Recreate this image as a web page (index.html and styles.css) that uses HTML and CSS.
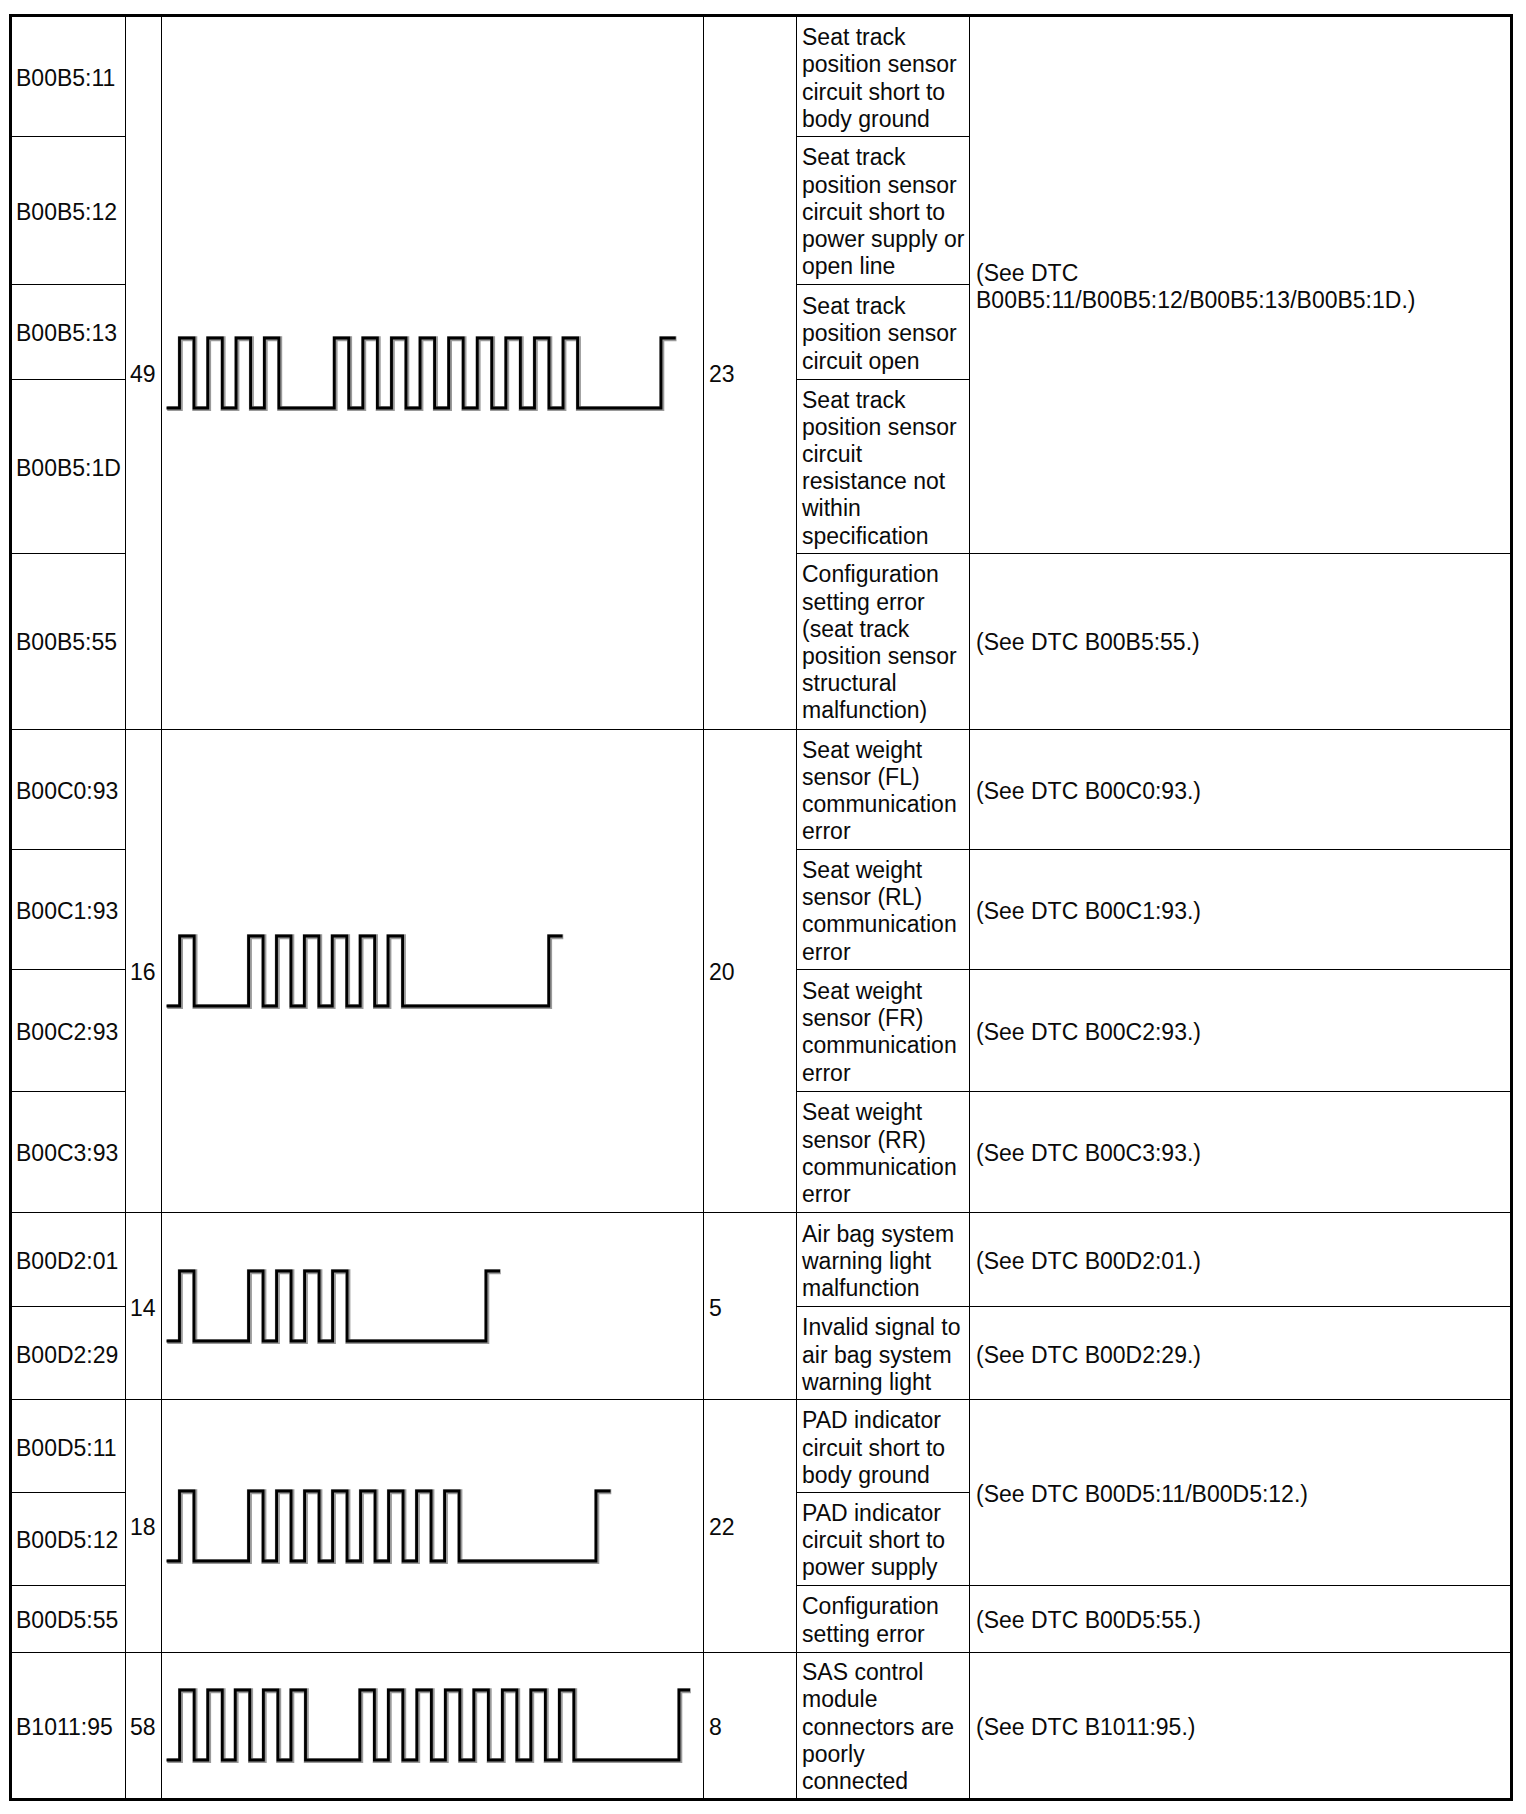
FILE: index.html
```html
<!DOCTYPE html>
<html lang="en">
<head>
<meta charset="utf-8">
<title>DTC table</title>
<link rel="stylesheet" href="styles.css">
</head>
<body>
<table class="dtc-table">
  <colgroup>
    <col class="c-code">
    <col class="c-num">
    <col class="c-wave">
    <col class="c-num2">
    <col class="c-desc">
    <col class="c-see">
  </colgroup>
  <tbody>
    <tr class="r1">
      <td class="code">B00B5:11</td>
      <td class="num" rowspan="5">49</td>
      <td class="wave" rowspan="5">
        <svg class="wf" width="542" height="76" viewBox="0 0 542 76">
          <path class="ghost" d="M4.5 73H17.5V3H32V73H45.8V3H60.3V73H74.1V3H88.6V73H102.4V3H116.9V73H172.3V3H186.8V73H200.9V3H215.4V73H229.5V3H244V73H258.1V3H272.6V73H286.7V3H301.2V73H315.3V3H329.8V73H343.9V3H358.4V73H372.5V3H387V73H401.1V3H415.6V73H499V3H513.7"/>
          <path class="line" d="M4.5 73H17.5V3H32V73H45.8V3H60.3V73H74.1V3H88.6V73H102.4V3H116.9V73H172.3V3H186.8V73H200.9V3H215.4V73H229.5V3H244V73H258.1V3H272.6V73H286.7V3H301.2V73H315.3V3H329.8V73H343.9V3H358.4V73H372.5V3H387V73H401.1V3H415.6V73H499V3H513.7"/>
        </svg>
      </td>
      <td class="num n2" rowspan="5">23</td>
      <td class="desc">Seat track<br>position sensor<br>circuit short to<br>body ground</td>
      <td class="see" rowspan="4">(See DTC<br>B00B5:11/B00B5:12/B00B5:13/B00B5:1D.)</td>
    </tr>
    <tr class="r2">
      <td class="code">B00B5:12</td>
      <td class="desc">Seat track<br>position sensor<br>circuit short to<br>power supply or<br>open line</td>
    </tr>
    <tr class="r3">
      <td class="code">B00B5:13</td>
      <td class="desc">Seat track<br>position sensor<br>circuit open</td>
    </tr>
    <tr class="r4">
      <td class="code">B00B5:1D</td>
      <td class="desc">Seat track<br>position sensor<br>circuit<br>resistance not<br>within<br>specification</td>
    </tr>
    <tr class="r5">
      <td class="code">B00B5:55</td>
      <td class="desc">Configuration<br>setting error<br>(seat track<br>position sensor<br>structural<br>malfunction)</td>
      <td class="see">(See DTC B00B5:55.)</td>
    </tr>

    <tr class="r6">
      <td class="code">B00C0:93</td>
      <td class="num" rowspan="4">16</td>
      <td class="wave" rowspan="4">
        <svg class="wf" width="542" height="76" viewBox="0 0 542 76">
          <path class="ghost" d="M4.5 73H17.7V3H32.2V73H86.6V3H101.1V73H114.5V3H129V73H142.4V3H156.9V73H170.3V3H184.8V73H198.2V3H212.7V73H226.1V3H240.6V73H386.8V3H400.5"/>
          <path class="line" d="M4.5 73H17.7V3H32.2V73H86.6V3H101.1V73H114.5V3H129V73H142.4V3H156.9V73H170.3V3H184.8V73H198.2V3H212.7V73H226.1V3H240.6V73H386.8V3H400.5"/>
        </svg>
      </td>
      <td class="num n2" rowspan="4">20</td>
      <td class="desc">Seat weight<br>sensor (FL)<br>communication<br>error</td>
      <td class="see">(See DTC B00C0:93.)</td>
    </tr>
    <tr class="r7">
      <td class="code">B00C1:93</td>
      <td class="desc">Seat weight<br>sensor (RL)<br>communication<br>error</td>
      <td class="see">(See DTC B00C1:93.)</td>
    </tr>
    <tr class="r8">
      <td class="code">B00C2:93</td>
      <td class="desc">Seat weight<br>sensor (FR)<br>communication<br>error</td>
      <td class="see">(See DTC B00C2:93.)</td>
    </tr>
    <tr class="r9">
      <td class="code">B00C3:93</td>
      <td class="desc">Seat weight<br>sensor (RR)<br>communication<br>error</td>
      <td class="see">(See DTC B00C3:93.)</td>
    </tr>

    <tr class="r10">
      <td class="code">B00D2:01</td>
      <td class="num" rowspan="2">14</td>
      <td class="wave" rowspan="2">
        <svg class="wf" width="542" height="76" viewBox="0 0 542 76">
          <path class="ghost" d="M4.5 73H17.5V3H32V73H86.6V3H101.1V73H114.6V3H129.1V73H142.6V3H157.1V73H170.6V3H185.1V73H324V3H338"/>
          <path class="line" d="M4.5 73H17.5V3H32V73H86.6V3H101.1V73H114.6V3H129.1V73H142.6V3H157.1V73H170.6V3H185.1V73H324V3H338"/>
        </svg>
      </td>
      <td class="num n2" rowspan="2">5</td>
      <td class="desc">Air bag system<br>warning light<br>malfunction</td>
      <td class="see">(See DTC B00D2:01.)</td>
    </tr>
    <tr class="r11">
      <td class="code">B00D2:29</td>
      <td class="desc">Invalid signal to<br>air bag system<br>warning light</td>
      <td class="see">(See DTC B00D2:29.)</td>
    </tr>

    <tr class="r12">
      <td class="code">B00D5:11</td>
      <td class="num" rowspan="3">18</td>
      <td class="wave" rowspan="3">
        <svg class="wf" width="542" height="76" viewBox="0 0 542 76">
          <path class="ghost" d="M4.5 73H17.5V3H32V73H86.6V3H101.1V73H114.6V3H129.1V73H142.6V3H157.1V73H170.6V3H185.1V73H198.6V3H213.1V73H226.6V3H241.1V73H254.6V3H269.1V73H282.6V3H297.1V73H434V3H448.5"/>
          <path class="line" d="M4.5 73H17.5V3H32V73H86.6V3H101.1V73H114.6V3H129.1V73H142.6V3H157.1V73H170.6V3H185.1V73H198.6V3H213.1V73H226.6V3H241.1V73H254.6V3H269.1V73H282.6V3H297.1V73H434V3H448.5"/>
        </svg>
      </td>
      <td class="num n2" rowspan="3">22</td>
      <td class="desc">PAD indicator<br>circuit short to<br>body ground</td>
      <td class="see" rowspan="2">(See DTC B00D5:11/B00D5:12.)</td>
    </tr>
    <tr class="r13">
      <td class="code">B00D5:12</td>
      <td class="desc">PAD indicator<br>circuit short to<br>power supply</td>
    </tr>
    <tr class="r14">
      <td class="code">B00D5:55</td>
      <td class="desc">Configuration<br>setting error</td>
      <td class="see">(See DTC B00D5:55.)</td>
    </tr>

    <tr class="r15 last">
      <td class="code">B1011:95</td>
      <td class="num">58</td>
      <td class="wave">
        <svg class="wf" width="542" height="76" viewBox="0 0 542 76">
          <path class="ghost" d="M4.5 73H17.7V3H32.2V73H45.8V3H60.3V73H73.3V3H87.8V73H101.4V3H115.9V73H129V3H143.5V73H197.9V3H212.4V73H226.4V3H240.9V73H254.9V3H269.4V73H283.4V3H297.9V73H311.9V3H326.4V73H340.4V3H354.9V73H368.9V3H383.4V73H397.4V3H411.9V73H517V3H528"/>
          <path class="line" d="M4.5 73H17.7V3H32.2V73H45.8V3H60.3V73H73.3V3H87.8V73H101.4V3H115.9V73H129V3H143.5V73H197.9V3H212.4V73H226.4V3H240.9V73H254.9V3H269.4V73H283.4V3H297.9V73H311.9V3H326.4V73H340.4V3H354.9V73H368.9V3H383.4V73H397.4V3H411.9V73H517V3H528"/>
        </svg>
      </td>
      <td class="num n2">8</td>
      <td class="desc">SAS control<br>module<br>connectors are<br>poorly<br>connected</td>
      <td class="see">(See DTC B1011:95.)</td>
    </tr>
  </tbody>
</table>
</body>
</html>
```

FILE: styles.css
```css
html, body {
  margin: 0;
  padding: 0;
  background: #ffffff;
}

body {
  font-family: "Liberation Sans", Arial, Helvetica, sans-serif;
  font-size: 23px;
  color: #0a0a0a;
}

.dtc-table {
  margin: 14px 0 0 9px;
  width: 1504px;
  box-sizing: border-box;
  border: 3px solid #000000;
  border-collapse: separate;
  border-spacing: 0;
  table-layout: fixed;
}

.c-code { width: 114px; }
.c-num  { width: 36px; }
.c-wave { width: 542px; }
.c-num2 { width: 93px; }
.c-desc { width: 173px; }
.c-see  { width: 540px; }

/* row heights (including the 1px rule under each row) */
.r1  { height: 120px; }
.r2  { height: 148px; }
.r3  { height: 95px; }
.r4  { height: 173.5px; }
.r5  { height: 176px; }
.r6  { height: 120.3px; }
.r7  { height: 120.3px; }
.r8  { height: 121.5px; }
.r9  { height: 121.5px; }
.r10 { height: 93.7px; }
.r11 { height: 93.7px; }
.r12 { height: 92.6px; }
.r13 { height: 92.5px; }
.r14 { height: 67px; }
.r15 { height: 145.4px; }

.dtc-table td {
  border-right: 1px solid #000000;
  border-bottom: 1px solid #000000;
  padding: 6px 3px 2px 5px;
  line-height: 27.2px;
  vertical-align: middle;
  text-align: left;
  white-space: nowrap;
  overflow: visible;
}

.dtc-table td.code {
  padding-left: 4px;
  padding-right: 1px;
}

.dtc-table td.num {
  padding-left: 4px;
  padding-right: 2px;
}

.dtc-table td.num.n2 {
  padding-left: 5px;
}

.dtc-table td.wave {
  padding: 0;
}

.dtc-table td.desc {
  padding-left: 5px;
  padding-right: 2px;
}

.dtc-table td.see {
  border-right: none;
  padding-left: 6px;
}

.dtc-table tr.last td {
  border-bottom: none;
}

.wf {
  display: block;
}

.wf path {
  fill: none;
  stroke-linejoin: miter;
  stroke-linecap: butt;
}

.wf .line {
  stroke: #000000;
  stroke-width: 2.8;
}

.wf .ghost {
  stroke: #9a9a9a;
  stroke-width: 5;
  transform: translate(0.8px, 0.8px);
}
```
